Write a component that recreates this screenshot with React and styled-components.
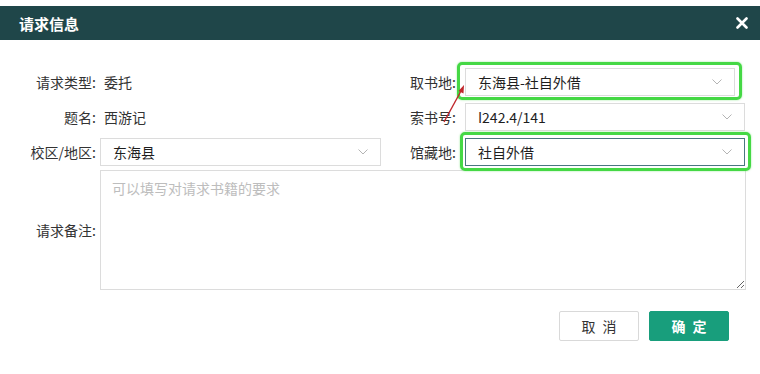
import React from 'react';
import styled, { createGlobalStyle } from 'styled-components';

const Global = createGlobalStyle`
  html, body { margin: 0; padding: 0; background: #fff; }
  body { font-family: "Noto Sans CJK SC", "Noto Sans", sans-serif; color: #333; }
  * { box-sizing: border-box; }
`;

const Page = styled.div`
  position: relative;
  width: 760px;
  height: 374px;
  padding-top: 6px;
`;

const Header = styled.div`
  height: 34px;
  background: #1f4649;
  display: flex;
  align-items: center;
  justify-content: space-between;
  padding: 0 12px 0 19px;
`;

const Title = styled.h2`
  margin: 0;
  font-size: 15px;
  font-weight: 600;
  color: #fff;
  line-height: 1;
`;

const Close = styled.button`
  border: 0;
  background: none;
  padding: 0;
  width: 12px;
  height: 12px;
  display: flex;
  cursor: pointer;
`;

const Form = styled.div`
  display: grid;
  grid-template-columns: 100px 281px 84px 280px;
  grid-template-rows: repeat(3, 28px) 120px;
  row-gap: 7px;
  margin-top: 28px;
  align-items: center;
  font-size: 14px;
`;

const Label = styled.label`
  text-align: right;
  padding-right: ${p => p.$pad}px;
  color: #333;
  white-space: nowrap;
  margin-top: ${p => (p.$lift ? '-6px' : '0')};
`;

const Value = styled.span`
  padding-left: 4px;
  color: #333;
`;

const Field = styled.div`
  position: relative;
  width: ${p => p.$width || '100%'};
  height: 28px;
`;

const Select = styled.div`
  height: 100%;
  border: 1px solid ${p => (p.$focus ? '#4a7780' : '#dcdcdc')};
  display: flex;
  align-items: center;
  justify-content: space-between;
  padding: 0 12px 0 12px;
  background: #fff;
  color: #1e1e1e;
  font-size: 14px;
`;

const Frame = styled.span`
  position: absolute;
  top: ${p => p.$t}px;
  right: ${p => p.$r}px;
  bottom: ${p => p.$b}px;
  left: ${p => p.$l}px;
  border: 3px solid #45d845;
  border-radius: 5px;
  box-shadow: 0 0 2px rgba(69, 216, 69, 0.6);
  pointer-events: none;
`;

const NoteArea = styled.textarea`
  grid-column: 2 / 5;
  align-self: start;
  margin: -3px 0 0 0;
  height: 120px;
  width: 646px;
  border: 1px solid #dcdcdc;
  padding: 7px 11px;
  font-family: inherit;
  font-size: 14px;
  line-height: 20px;
  color: #333;
  resize: both;
  outline: none;
  &::placeholder { color: #bdbdbd; }
`;

const Footer = styled.div`
  display: flex;
  justify-content: flex-end;
  gap: 10px;
  padding-right: 31px;
  margin-top: 18px;
`;

const Button = styled.button`
  width: 80px;
  height: 30px;
  border-radius: 2px;
  font-family: inherit;
  font-size: 14px;
  letter-spacing: 2px;
  text-indent: 2px;
  cursor: pointer;
  border: 1px solid ${p => (p.$primary ? '#189e7c' : '#d9d9d9')};
  background: ${p => (p.$primary ? '#189e7c' : '#fff')};
  color: ${p => (p.$primary ? '#fff' : '#333')};
  font-weight: ${p => (p.$primary ? 600 : 400)};
`;

const Arrow = styled.svg`
  position: absolute;
  left: 438px;
  top: 82px;
  pointer-events: none;
`;

const Chevron = () => (
  <svg width="10" height="6" viewBox="0 0 10 6">
    <path d="M0.5 0.5 L5 5 L9.5 0.5" fill="none" stroke="#b4b4b4" strokeWidth="1" />
  </svg>
);

const Dropdown = ({ value, focus }) => (
  <Select $focus={focus}>
    <span>{value}</span>
    <Chevron />
  </Select>
);

export default function App() {
  return (
    <Page>
      <Global />
      <Header>
        <Title>请求信息</Title>
        <Close aria-label="关闭">
          <svg width="12" height="12" viewBox="0 0 12 12">
            <path d="M1.5 1.5 L10.5 10.5 M10.5 1.5 L1.5 10.5" stroke="#fff" strokeWidth="2.6" strokeLinecap="round" />
          </svg>
        </Close>
      </Header>
      <Form>
        <Label $pad={4}>请求类型:</Label>
        <Value>委托</Value>
        <Label $pad={9}>取书地:</Label>
        <Field $width="270px">
          <Dropdown value="东海县-社自外借" />
          <Frame $t={-6} $r={-7} $b={-4} $l={-8} />
        </Field>

        <Label $pad={4}>题名:</Label>
        <Value>西游记</Value>
        <Label $pad={9}>索书号:</Label>
        <Field>
          <Dropdown value="I242.4/141" />
        </Field>

        <Label $pad={4}>校区/地区:</Label>
        <Field>
          <Dropdown value="东海县" />
        </Field>
        <Label $pad={9}>馆藏地:</Label>
        <Field>
          <Dropdown value="社自外借" focus />
          <Frame $t={-6} $r={-6} $b={-5} $l={-5} />
        </Field>

        <Label $pad={4} $lift>请求备注:</Label>
        <NoteArea placeholder="可以填写对请求书籍的要求" />
      </Form>
      <Footer>
        <Button>取 消</Button>
        <Button $primary>确 定</Button>
      </Footer>
      <Arrow width="32" height="44" viewBox="0 0 32 44">
        <line x1="6" y1="40" x2="23" y2="9" stroke="#c0262b" strokeWidth="1.4" />
        <polygon points="26,3 20.5,9 25.5,11.5" fill="#c0262b" />
      </Arrow>
    </Page>
  );
}
